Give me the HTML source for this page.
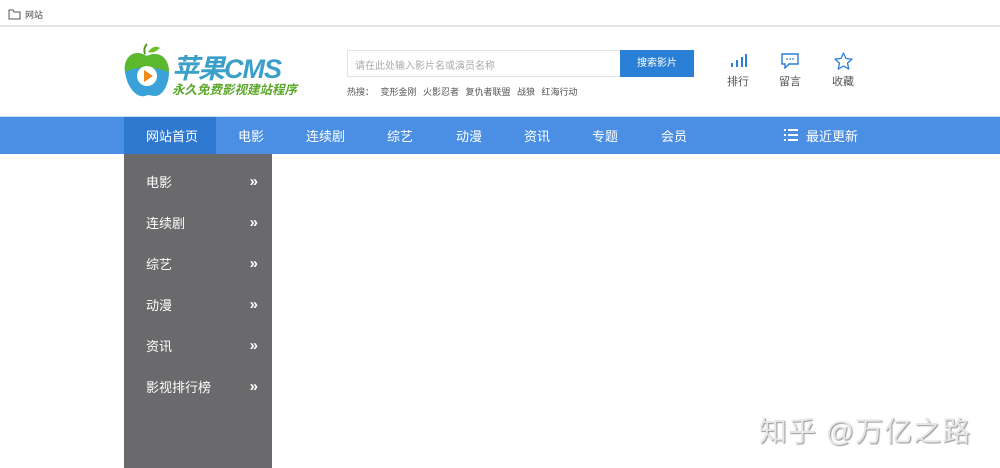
<!DOCTYPE html>
<html><head><meta charset="utf-8"><style>
*{margin:0;padding:0;box-sizing:border-box}
body{width:1000px;height:468px;overflow:hidden;background:#fff;font-family:"Liberation Sans","Noto Sans CJK SC",sans-serif;position:relative;color:#333}
.a{position:absolute}
.top{left:0;top:0;width:1000px;height:27px;border-bottom:2px solid #e4e4e4;background:#fff}
.nav{left:0;top:117px;width:1000px;height:37px;background:#4a8fe3}
.nav span{position:absolute;top:9px;font-size:13px;color:#fff}
.side{left:124px;top:154px;width:148px;height:314px;background:#6a696b}
.side div{position:absolute;left:22px;font-size:13px;color:#fff;width:114px;line-height:16px}
.side div b{position:absolute;right:2px;top:-1px;font-weight:bold;font-size:15px}
.ic{font-size:11px;color:#555;text-align:center;width:40px}
</style></head><body>
<div class="a top"><svg class="a" style="left:8px;top:9px" width="13" height="11"><path d="M1 1h4l1 2h6v7H1z" fill="none" stroke="#555"/></svg><span class="a" style="left:25px;top:8px;font-size:9px;color:#444">网站</span></div>
<svg class="a" style="left:123px;top:42px" width="48" height="58"><path d="M22 12 q-2-6 2-10" stroke="#5a9a2a" stroke-width="2" fill="none"/><path d="M25 10 q6-8 12-4 q-6 6-12 4z" fill="#6bbf2a"/><path d="M24 14 C10 6 0 16 2 30 C4 46 14 56 22 54 C26 52 28 54 32 54 C40 54 46 42 46 30 C46 16 36 8 24 14z" fill="#3aa2d8"/><path d="M24 14 C10 6 0 16 2 30 C14 24 30 24 46 30 C46 16 36 8 24 14z" fill="#5cb82d"/><circle cx="24" cy="34" r="10" fill="#fff"/><path d="M21 28 l9 6 -9 6z" fill="#f08a1a"/></svg>
<div class="a" style="left:172px;top:47px;font-size:27px;font-style:italic;color:#3aa0c8;font-weight:bold;letter-spacing:-1px">苹果CMS</div>
<div class="a" style="left:172px;top:79px;font-size:12.5px;color:#5aa72a;font-weight:bold;font-style:italic">永久免费影视建站程序</div>
<div class="a" style="left:347px;top:50px;width:274px;height:27px;border:1px solid #e3e3e3"></div>
<div class="a" style="left:355px;top:57px;font-size:10px;color:#aaa">请在此处输入影片名或演员名称</div>
<div class="a" style="left:620px;top:50px;width:74px;height:27px;background:#2a7fd6;color:#fff;font-size:10px;text-align:center;line-height:27px">搜索影片</div>
<div class="a" style="left:347px;top:85px;font-size:9px;color:#555;word-spacing:4px">热搜： 变形金刚 火影忍者 复仇者联盟 战狼 红海行动</div>
<svg class="a" style="left:730px;top:54px" width="18" height="14"><rect x="1" y="9" width="2" height="4" fill="#2a7fd6"/><rect x="6" y="6" width="2" height="7" fill="#2a7fd6"/><rect x="11" y="3" width="2" height="10" fill="#2a7fd6"/><rect x="15" y="0" width="2" height="13" fill="#2a7fd6"/></svg>
<div class="a ic" style="left:718px;top:73px">排行</div>
<svg class="a" style="left:781px;top:53px" width="18" height="16"><path d="M1 1h16v10H8l-4 4v-4H1z" fill="none" stroke="#2a7fd6" stroke-width="1.4"/><circle cx="6" cy="6" r=".9" fill="#2a7fd6"/><circle cx="9" cy="6" r=".9" fill="#2a7fd6"/><circle cx="12" cy="6" r=".9" fill="#2a7fd6"/></svg>
<div class="a ic" style="left:770px;top:73px">留言</div>
<svg class="a" style="left:834px;top:52px" width="19" height="18"><path d="M9.5 1l2.5 5.5 6 .6-4.5 4 1.3 6-5.3-3.1-5.3 3.1 1.3-6-4.5-4 6-.6z" fill="none" stroke="#2a7fd6" stroke-width="1.3" stroke-linejoin="round"/></svg>
<div class="a ic" style="left:823px;top:73px">收藏</div>
<div class="a" style="left:0;top:116px;width:1000px;height:1px;background:#c8dcf4"></div>
<div class="a nav">
<div class="a" style="left:124px;top:0;width:92px;height:37px;background:#2f78d0"></div>
<span style="left:146px">网站首页</span><span style="left:238px">电影</span><span style="left:306px">连续剧</span><span style="left:387px">综艺</span><span style="left:456px">动漫</span><span style="left:524px">资讯</span><span style="left:592px">专题</span><span style="left:661px">会员</span>
<svg class="a" style="left:784px;top:12px" width="14" height="12"><g fill="#fff"><rect x="0" y="0" width="2" height="2"/><rect x="0" y="5" width="2" height="2"/><rect x="0" y="10" width="2" height="2"/><rect x="4" y="0" width="10" height="2"/><rect x="4" y="5" width="10" height="2"/><rect x="4" y="10" width="10" height="2"/></g></svg>
<span style="left:806px">最近更新</span>
</div>
<div class="a side">
<div style="top:21px">电影<b>»</b></div>
<div style="top:62px">连续剧<b>»</b></div>
<div style="top:103px">综艺<b>»</b></div>
<div style="top:144px">动漫<b>»</b></div>
<div style="top:185px">资讯<b>»</b></div>
<div style="top:226px">影视排行榜<b>»</b></div>
</div>
<div class="a" style="left:759px;top:410px;font-size:28px;letter-spacing:1px;color:#e6e6e6;text-shadow:1px 1px 1px #999">知乎 @万亿之路</div>
</body></html>
